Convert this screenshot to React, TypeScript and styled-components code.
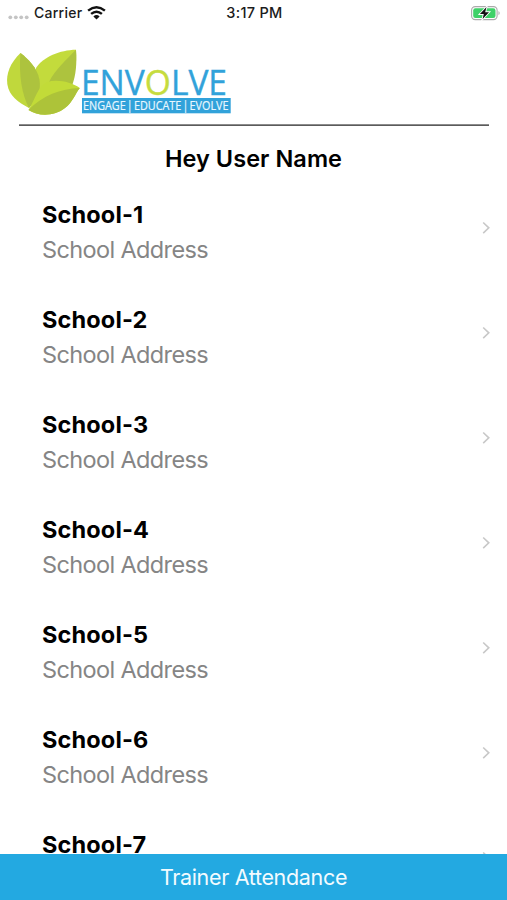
import React from 'react';
import styled, { createGlobalStyle } from 'styled-components';

const GlobalStyle = createGlobalStyle`
  * { box-sizing: border-box; }
  body { margin: 0; background: #fff; font-family: Inter, Roboto, sans-serif; }
`;

const Screen = styled.div`
  height: 900px;
  display: flex;
  flex-direction: column;
  overflow: hidden;
  background: #fff;
`;

const StatusBar = styled.header`
  height: 26px;
  flex: none;
  display: grid;
  grid-template-columns: 1fr auto 1fr;
  align-items: center;
  padding: 0 6px 0 8px;
  font-size: 14px;
  font-weight: 500;
  line-height: 26px;
  color: #1c1c1c;
`;

const Network = styled.div`
  display: flex;
  align-items: center;
  svg { display: block; }
`;

const Carrier = styled.span`
  margin: 0 5px 0 5px;
  letter-spacing: 0.25px;
`;

const Clock = styled.time`
  font-size: 14.5px;
  letter-spacing: 0.3px;
`;

const Battery = styled.div`
  display: flex;
  justify-content: flex-end;
`;

const Brand = styled.div`
  height: 98px;
  flex: none;
  svg { display: block; }
`;

const Divider = styled.hr`
  flex: none;
  width: 470px;
  height: 2px;
  margin: 0 0 0 19px;
  border: 0;
  background: linear-gradient(#8c8c8c 50%, #5b5b5b 50%);
`;

const Greeting = styled.h1`
  flex: none;
  height: 49px;
  margin: 0;
  padding-top: 18px;
  text-align: center;
  font-size: 23.5px;
  line-height: 30px;
  font-weight: 600;
  letter-spacing: 0.05px;
  color: #000;
`;

const List = styled.ul`
  flex: 1;
  min-height: 0;
  margin: 0;
  padding: 0;
  overflow: hidden;
  list-style: none;
`;

const Row = styled.li`
  height: 105px;
  padding: 0 16px 0 42px;
  display: flex;
  align-items: center;
  justify-content: space-between;
`;

const RowText = styled.div`
  display: flex;
  flex-direction: column;
  padding-top: 9px;
`;

const Name = styled.span`
  font-size: 23.5px;
  line-height: 35px;
  font-weight: 700;
  letter-spacing: 0.15px;
  color: #000;
`;

const Address = styled.span`
  font-size: 23.5px;
  line-height: 36px;
  letter-spacing: -0.63px;
  color: #858585;
`;

const ActionButton = styled.button`
  height: 46px;
  flex: none;
  padding: 0;
  border: 0;
  background: #23a9e1;
  color: #f2fbff;
  font-family: inherit;
  font-size: 21.5px;
  line-height: 46px;
  font-weight: 400;
  letter-spacing: -0.33px;
`;

const SignalDots = () => (
  <svg width="21" height="26" viewBox="0 0 21 26" fill="#c4c4c4">
    {[2.3, 7.8, 13.2, 18.7].map((x) => <circle key={x} cx={x} cy="17.3" r="1.9" />)}
  </svg>
);

const Wifi = () => (
  <svg width="19" height="26" viewBox="0 0 19 26" fill="none" stroke="#111" strokeWidth="2.5">
    <path d="M1.1 10.6 Q9.5 3.8 17.9 10.6" />
    <path d="M4.1 13.9 Q9.5 9.5 14.9 13.9" />
    <path d="M6.4 16.4 Q9.5 13.8 12.6 16.4 L9.5 19.6Z" fill="#111" stroke="none" />
  </svg>
);

const BatteryIcon = () => (
  <svg width="31" height="26" viewBox="0 0 31 26">
    <rect x="1.6" y="6.6" width="25.5" height="13" rx="3.6" fill="#fff" stroke="#aaa" strokeWidth="1.1" />
    <rect x="3.2" y="8.2" width="22.3" height="9.8" rx="2.2" fill="#3fd168" />
    <path d="M28.5 11 Q30.8 13.1 28.5 15.2Z" fill="#aaa" />
    <path d="M16.5 7 L9.9 14 H13.8 L12.6 19 L19 12.2 H15.2Z" fill="#111" stroke="#fff" strokeWidth="1.8" paintOrder="stroke" />
  </svg>
);

const Logo = () => (
  <svg width="240" height="98" viewBox="0 26 240 98" role="img" aria-label="Envolve">
    <path d="M76 49.8 C60 50 43 57 36 68 L30 106 L66 87 C75 77 77 64 76 49.8Z" fill="#c3db3c" />
    <path d="M76 49.8 C66 60 55 70 49 82 L72 86 C76 75 77 64 76 49.8Z" fill="#adc33e" />
    <path d="M20.5 53 C10 63 6 74 7.3 84 C9 96 18 102 29 108 C38 99 41 90 39.5 80 C37 67 28 59 20.5 53Z" fill="#c0d83c" />
    <path d="M20.5 53 C18.5 75 22 95 29 108 C38 99 41 90 39.5 80 C37 67 28 59 20.5 53Z" fill="#adc33e" />
    <path d="M79.8 88 C71 82 58 79 47 82 C37 87 36 98 28.5 110 C39 117 55 116 65 108 C73 102 75 94 79.8 88Z" fill="#c2db38" />
    <path d="M79.8 88 C60 89 43 95 28.5 110 C39 117 55 116 65 108 C73 102 75 94 79.8 88Z" fill="#adc339" />
    <text x="81" y="95" fontFamily="Open Sans, Noto Sans, sans-serif" fontSize="35" fill="#31a2da" stroke="#31a2da" strokeWidth="0.4" textLength="146" lengthAdjust="spacingAndGlyphs">
      ENV<tspan fill="#c6dc3e" stroke="#c6dc3e">O</tspan>LVE
    </text>
    <rect x="82" y="98" width="148.7" height="15.3" fill="#31a2da" />
    <text x="83" y="110.3" fontFamily="Open Sans, Noto Sans, sans-serif" fontSize="12.5" wordSpacing="-1.9" fill="#e8f7ff" stroke="#e8f7ff" strokeWidth="0.2" textLength="145.5" lengthAdjust="spacingAndGlyphs">
      ENGAGE | EDUCATE | EVOLVE
    </text>
  </svg>
);

const Chevron = () => (
  <svg width="10" height="14" viewBox="0 0 10 14" fill="none" stroke="#c8c8c8" strokeWidth="1.6">
    <path d="M2.2 1.5 L7.8 6.8 L2.2 12.1" />
  </svg>
);

const schools = [1, 2, 3, 4, 5, 6, 7].map((n) => ({ name: `School-${n}`, address: 'School Address' }));

export default function App() {
  return (
    <>
      <GlobalStyle />
      <Screen>
        <StatusBar>
          <Network><SignalDots /><Carrier>Carrier</Carrier><Wifi /></Network>
          <Clock>3:17 PM</Clock>
          <Battery><BatteryIcon /></Battery>
        </StatusBar>
        <Brand><Logo /></Brand>
        <Divider />
        <Greeting>Hey User Name</Greeting>
        <List>
          {schools.map((school) => (
            <Row key={school.name}>
              <RowText>
                <Name>{school.name}</Name>
                <Address>{school.address}</Address>
              </RowText>
              <Chevron />
            </Row>
          ))}
        </List>
        <ActionButton type="button">Trainer Attendance</ActionButton>
      </Screen>
    </>
  );
}
